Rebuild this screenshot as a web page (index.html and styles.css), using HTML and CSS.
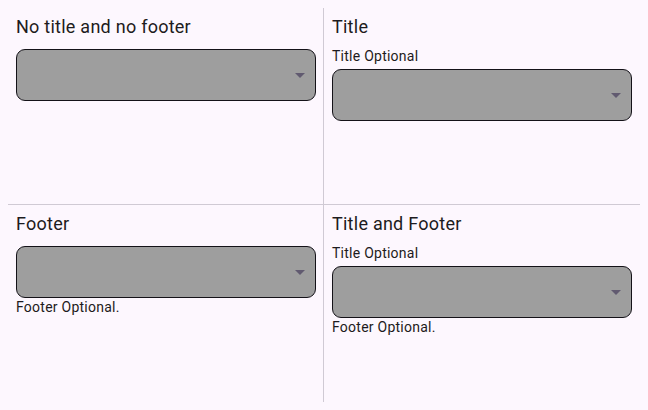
FILE: index.html
```html
<!DOCTYPE html>
<html>
<head>
<meta charset="utf-8">
<link rel="stylesheet" href="styles.css">
</head>
<body>
<div class="grid">
  <section class="cell c1">
    <h2 class="heading">No title and no footer</h2>
    <div class="dropdown"><svg class="arrow" viewBox="0 0 24 24" width="24" height="24"><path d="M7 10l5 5 5-5z"/></svg></div>
  </section>
  <section class="cell c2">
    <h2 class="heading">Title</h2>
    <div class="label">Title Optional</div>
    <div class="dropdown"><svg class="arrow" viewBox="0 0 24 24" width="24" height="24"><path d="M7 10l5 5 5-5z"/></svg></div>
  </section>
  <section class="cell c3">
    <h2 class="heading">Footer</h2>
    <div class="dropdown"><svg class="arrow" viewBox="0 0 24 24" width="24" height="24"><path d="M7 10l5 5 5-5z"/></svg></div>
    <div class="footer">Footer Optional.</div>
  </section>
  <section class="cell c4">
    <h2 class="heading">Title and Footer</h2>
    <div class="label">Title Optional</div>
    <div class="dropdown"><svg class="arrow" viewBox="0 0 24 24" width="24" height="24"><path d="M7 10l5 5 5-5z"/></svg></div>
    <div class="footer">Footer Optional.</div>
  </section>
</div>
</body>
</html>
```
FILE: styles.css
```css
html, body {
  margin: 0;
  padding: 0;
  background: #fdf7fe;
}
body {
  padding: 8px;
  font-family: Roboto, "Noto Sans", sans-serif;
  color: #1d1b20;
}
.grid {
  display: grid;
  grid-template-columns: 316px 316px;
  grid-template-rows: 197px 197px;
  width: 632px;
  height: 394px;
}
.cell {
  padding: 8px;
  display: flex;
  flex-direction: column;
  align-items: flex-start;
  box-sizing: border-box;
}
.c1, .c3 {
  border-right: 1px solid #d0cad4;
}
.c1, .c2 {
  border-bottom: 1px solid #d0cad4;
}
.heading {
  margin: 0 0 12px 0;
  font-size: 18px;
  font-weight: 400;
  line-height: 21px;
  letter-spacing: 0.25px;
}
.label, .footer {
  font-size: 14px;
  line-height: 16px;
  letter-spacing: 0.25px;
}
.label {
  margin-top: -1px;
  margin-bottom: 5px;
}
.footer {
  margin-top: 1px;
}
.dropdown {
  width: 300px;
  height: 52px;
  box-sizing: border-box;
  border: 1px solid #141218;
  border-radius: 9px;
  background: #9e9e9e;
  display: flex;
  align-items: center;
  justify-content: flex-end;
  padding-right: 3px;
}
.arrow {
  fill: #615a70;
  display: block;
}
```
